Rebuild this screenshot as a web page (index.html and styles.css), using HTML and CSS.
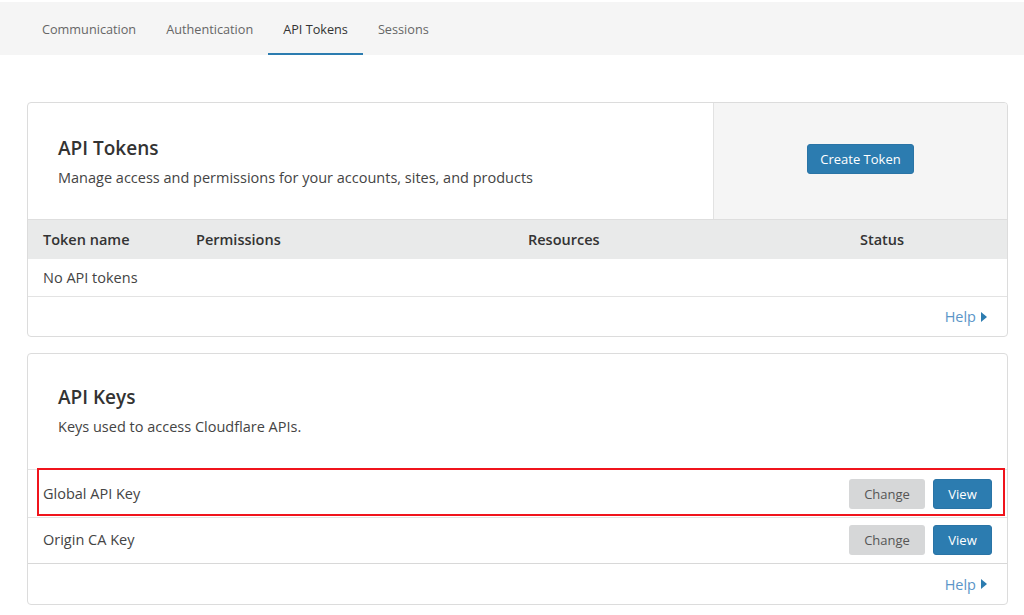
FILE: index.html
```html
<!DOCTYPE html>
<html lang="en">
<head>
<meta charset="utf-8">
<title>API Tokens</title>
<link rel="stylesheet" href="styles.css">
</head>
<body>
<nav class="tabs">
  <a class="tab">Communication</a>
  <a class="tab">Authentication</a>
  <a class="tab active">API Tokens</a>
  <a class="tab">Sessions</a>
</nav>
<main class="content">
  <section class="card">
    <div class="card-head split">
      <div class="head-text">
        <h2 class="title">API Tokens</h2>
        <p class="desc">Manage access and permissions for your accounts, sites, and products</p>
      </div>
      <div class="head-action">
        <button class="btn btn-primary btn-create">Create Token</button>
      </div>
    </div>
    <div class="grid-row table-head">
      <span>Token name</span><span>Permissions</span><span>Resources</span><span>Status</span>
    </div>
    <div class="grid-row table-row">
      <span>No API tokens</span>
    </div>
    <div class="card-foot">
      <a class="help">Help <span class="caret"></span></a>
    </div>
  </section>

  <section class="card">
    <div class="card-head plain">
      <h2 class="title">API Keys</h2>
      <p class="desc">Keys used to access Cloudflare APIs.</p>
    </div>
    <div class="key-row">
      <span class="key-name">Global API Key</span>
      <div class="key-actions">
        <button class="btn btn-muted">Change</button>
        <button class="btn btn-primary">View</button>
      </div>
      <span class="highlight-box"></span>
    </div>
    <div class="key-row key-row-last">
      <span class="key-name">Origin CA Key</span>
      <div class="key-actions">
        <button class="btn btn-muted">Change</button>
        <button class="btn btn-primary">View</button>
      </div>
    </div>
    <div class="card-foot keys-foot">
      <a class="help">Help <span class="caret"></span></a>
    </div>
  </section>
</main>
</body>
</html>
```

FILE: styles.css
```css
* { box-sizing: border-box; }
html, body { margin: 0; padding: 0; background: #fff; }
body {
  font-family: "Open Sans", "Noto Sans", sans-serif;
  color: #333;
}
.tabs {
  margin-top: 2px;
  height: 53px;
  background: #f5f5f5;
  display: flex;
  padding-left: 27px;
}
.tab {
  display: block;
  padding: 0 15px;
  line-height: 51px;
  padding-top: 2px;
  font-size: 12.7px;
  color: #666;
  border-bottom: 2px solid transparent;
  cursor: pointer;
}
.tab.active {
  color: #333;
  border-bottom-color: #2c7cb0;
}
.content {
  padding: 47px 16px 0 27px;
  display: flex;
  flex-direction: column;
  gap: 16px;
}
.card {
  border: 1px solid #dcdcdc;
  border-radius: 4px;
  background: #fff;
  overflow: hidden;
}
.card-head.split {
  display: flex;
  height: 117px;
  border-bottom: 1px solid #dedede;
}
.head-text {
  flex: 1;
  padding: 0 30px;
  display: flex;
  flex-direction: column;
  justify-content: center;
}
.title {
  margin: 0;
  font-size: 19px;
  font-weight: 600;
  color: #333;
  line-height: 26px;
}
.desc {
  margin: 7px 0 0;
  font-size: 14.5px;
  color: #444;
  line-height: 20px;
}
.head-action {
  width: 294px;
  background: #f5f5f5;
  border-left: 1px solid #e2e2e2;
  display: flex;
  align-items: center;
  justify-content: center;
  padding-bottom: 4px;
}
.btn {
  font-family: inherit;
  font-size: 13px;
  border: none;
  border-radius: 3px;
  height: 30px;
  cursor: pointer;
}
.btn-primary {
  background: #2c7cb0;
  color: #fff;
  border: 1px solid #2a74a6;
}
.btn-create { width: 107px; }
.btn-muted {
  background: #d6d7d8;
  color: #555;
  width: 76px;
}
.key-actions .btn-primary { width: 59px; }
.grid-row {
  display: grid;
  grid-template-columns: 153px 332px 332px 1fr;
  padding-left: 15px;
  align-items: center;
  font-size: 14.5px;
}
.table-head {
  height: 39px;
  background: #e9eaea;
  font-weight: 600;
  color: #333;
}
.table-row {
  height: 38px;
  border-bottom: 1px solid #e3e3e3;
  color: #444;
}
.card-foot {
  height: 39px;
  display: flex;
  align-items: center;
  justify-content: flex-end;
  padding-right: 20px;
}
.keys-foot { height: 40px; }
.help {
  font-size: 14.5px;
  color: #5b95c8;
  display: flex;
  align-items: center;
  gap: 5px;
  cursor: pointer;
}
.caret {
  width: 0;
  height: 0;
  border-top: 5px solid transparent;
  border-bottom: 5px solid transparent;
  border-left: 6px solid #2c7cb0;
}
.card-head.plain {
  height: 115px;
  padding: 0 30px 2px;
  display: flex;
  flex-direction: column;
  justify-content: center;
}
.key-row {
  position: relative;
  height: 48px;
  border-top: 1px solid #e3e3e3;
  display: flex;
  align-items: center;
  justify-content: space-between;
  padding: 0 15px;
  font-size: 14.5px;
  color: #444;
}
.key-row-last {
  height: 47px;
  border-bottom: 1px solid #d8d8d8;
  padding-bottom: 2px;
}
.key-actions {
  display: flex;
  gap: 8px;
}
.highlight-box {
  position: absolute;
  left: 9px;
  right: 2px;
  top: -2px;
  bottom: 1px;
  border: 2.5px solid #f0141c;
  pointer-events: none;
}
```
